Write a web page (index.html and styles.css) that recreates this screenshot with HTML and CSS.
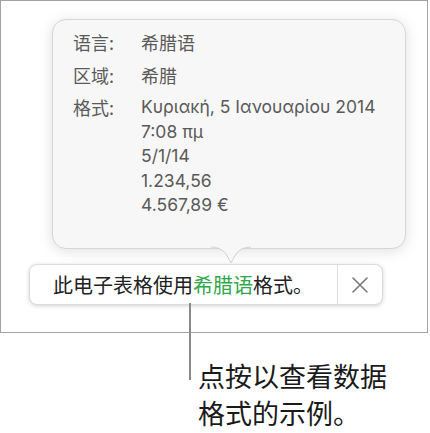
FILE: index.html
```html
<!DOCTYPE html>
<html lang="zh-CN">
<head>
<meta charset="utf-8">
<link rel="stylesheet" href="styles.css">
</head>
<body>
<div class="page">
  <div class="frame">
    <div class="popover">
      <div class="row">
        <div class="label">语言:</div>
        <div class="value">希腊语</div>
      </div>
      <div class="row">
        <div class="label">区域:</div>
        <div class="value">希腊</div>
      </div>
      <div class="row">
        <div class="label">格式:</div>
        <div class="value">
          <div>Κυριακή, 5 Ιανουαρίου 2014</div>
          <div>7:08 πμ</div>
          <div>5/1/14</div>
          <div>1.234,56</div>
          <div>4.567,89 €</div>
        </div>
      </div>
      <svg class="arrow" width="40" height="20" viewBox="0 0 40 20">
        <path d="M0 1 Q10 1 15 8 L20 17 L25 8 Q30 1 40 1 Z" fill="#f7f7f7"/>
        <path d="M0 1 Q10 1 15 8 L20 17 L25 8 Q30 1 40 1" fill="none" stroke="#d2d2d2" stroke-width="1"/>
      </svg>
    </div>
    <div class="banner">
      <div class="message">此电子表格使用<span class="green">希腊语</span>格式。</div>
      <div class="close">
        <svg width="18" height="18" viewBox="0 0 18 18">
          <path d="M2 2 L16 16 M16 2 L2 16" stroke="#7a7a7a" stroke-width="1.6" fill="none" stroke-linecap="round"/>
        </svg>
      </div>
    </div>
  </div>
  <div class="leader"></div>
  <div class="callout">点按以查看数据<br>格式的示例。</div>
</div>
</body>
</html>
```

FILE: styles.css
```css
html, body {
  margin: 0;
  padding: 0;
  background: #ffffff;
}
.page {
  position: relative;
  width: 430px;
  height: 433px;
  overflow: hidden;
  font-family: "Inter", "Noto Sans CJK SC", sans-serif;
}
.frame {
  box-sizing: border-box;
  width: 428px;
  height: 333px;
  border: 1px solid #a3a3a3;
  background: #ffffff;
  padding-top: 18px;
  display: flex;
  flex-direction: column;
}
.popover {
  position: relative;
  box-sizing: border-box;
  margin-left: 51px;
  width: 354px;
  height: 230px;
  background: #f7f7f7;
  border: 1px solid #d6d6d6;
  border-radius: 14px;
  box-shadow: 0 2px 14px rgba(0, 0, 0, 0.13);
  padding: 10px 0 0 20px;
  display: flex;
  flex-direction: column;
  gap: 8px;
  color: #5a5a5a;
  font-size: 17.5px;
  line-height: 24.5px;
}
.row {
  display: flex;
}
.label {
  width: 68px;
  flex: none;
  font-family: "Noto Sans CJK SC", sans-serif;
  font-size: 18px;
}
.value {
  font-family: "Inter", "Noto Sans CJK SC", sans-serif;
}
.row:nth-child(-n+2) .value {
  font-family: "Noto Sans CJK SC", sans-serif;
  font-size: 18px;
}
.arrow {
  position: absolute;
  left: 158px;
  bottom: -18px;
}
.banner {
  box-sizing: border-box;
  margin-left: 28px;
  margin-top: 15px;
  width: 354px;
  height: 41px;
  background: #ffffff;
  border: 1px solid #dcdcdc;
  border-radius: 8px;
  box-shadow: 0 1px 4px rgba(0, 0, 0, 0.18);
  display: flex;
  align-items: stretch;
}
.message {
  flex: 1;
  display: flex;
  align-items: center;
  padding-left: 23px;
  font-family: "Noto Sans CJK SC", sans-serif;
  font-size: 20px;
  color: #222222;
}
.green {
  color: #2fa84b;
}
.close {
  width: 44px;
  border-left: 1px solid #dedede;
  display: flex;
  align-items: center;
  justify-content: center;
}
.leader {
  position: absolute;
  left: 189px;
  top: 303px;
  width: 2px;
  height: 77px;
  background: #8a8a8a;
}
.callout {
  margin-top: 24px;
  margin-left: 198px;
  font-family: "Noto Sans CJK SC", sans-serif;
  font-size: 27px;
  line-height: 37px;
  color: #1a1a1a;
}
```
